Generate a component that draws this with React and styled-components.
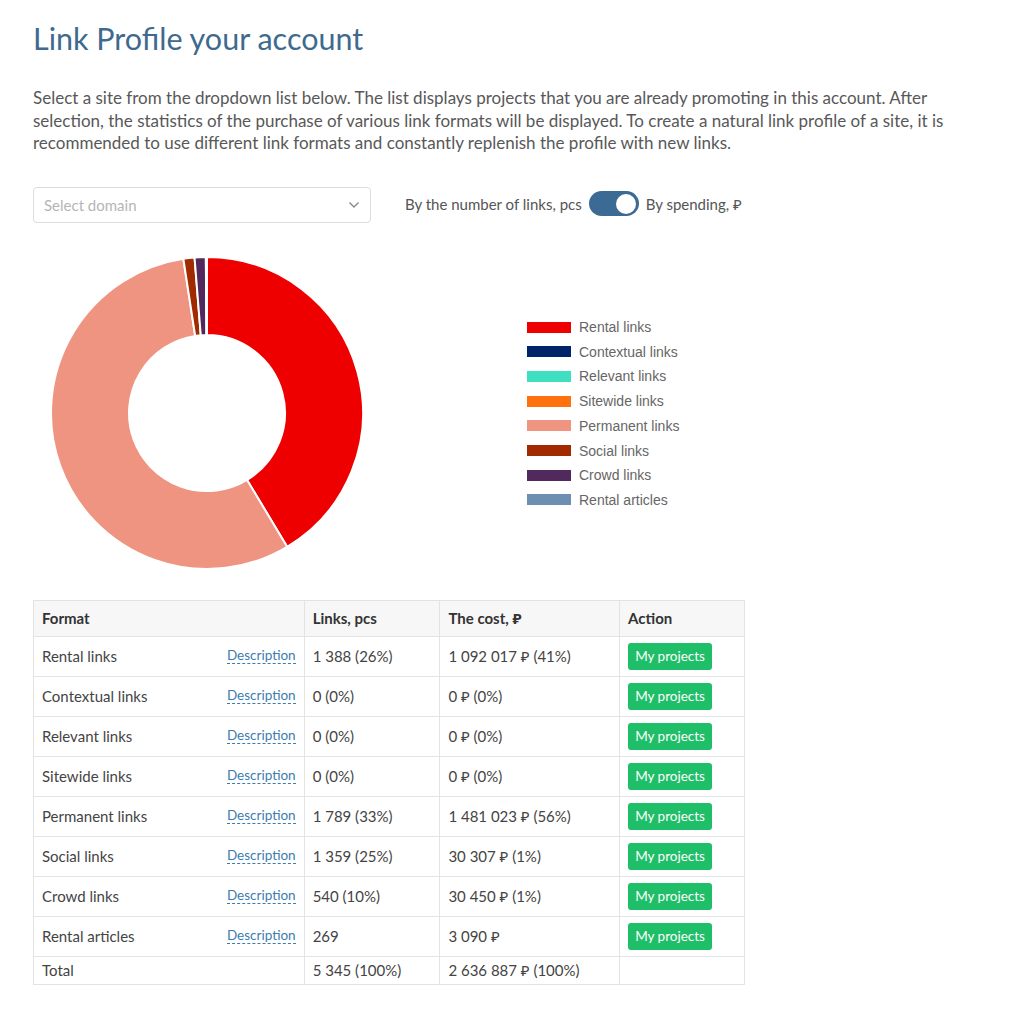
import React from "react";
import styled, { createGlobalStyle } from "styled-components";

const GlobalStyle = createGlobalStyle`
  html, body { margin: 0; padding: 0; background: #fff; }
  body { font-family: Lato, "Noto Sans", sans-serif; color: #555; }
  * { box-sizing: border-box; }
`;

const Page = styled.div`
  padding: 18px 30px 30px 33px;
  width: 1036px;
`;

const Title = styled.h1`
  margin: 0;
  font-size: 30.5px;
  font-weight: 400;
  color: #3e6a8e;
  line-height: 40px;
`;

const Intro = styled.p`
  margin: 29px 0 0;
  font-size: 17px;
  line-height: 22.5px;
  color: #585858;
  max-width: 955px;
`;

const Controls = styled.div`
  display: flex;
  align-items: center;
  margin-top: 32px;
  gap: 34px;
`;

const Select = styled.div`
  width: 338px;
  height: 36px;
  border: 1px solid #dcdcdc;
  border-radius: 4px;
  display: flex;
  align-items: center;
  justify-content: space-between;
  padding: 0 10px 0 10px;
  font-size: 15px;
  color: #b5b5b5;
`;

const SwitchRow = styled.div`
  display: flex;
  align-items: center;
  gap: 7px;
  font-size: 15px;
  color: #555;
  margin-top: -2px;
`;

const Track = styled.div`
  width: 50px;
  height: 25px;
  border-radius: 13px;
  background: #3b6b95;
  display: flex;
  align-items: center;
  justify-content: ${(p) => (p.on ? "flex-end" : "flex-start")};
  padding: 0 3px;
`;

const Knob = styled.div`
  width: 20px;
  height: 20px;
  border-radius: 50%;
  background: #fff;
`;

const ChartRow = styled.div`
  display: flex;
  align-items: center;
  margin-top: 33px;
`;

const ChartBox = styled.div`
  width: 494px;
  height: 314px;
  display: flex;
  align-items: center;
  padding-left: 17px;
`;

const Legend = styled.ul`
  list-style: none;
  margin: 2px 0 0;
  padding: 0;
  font-family: "Liberation Sans", Arial, sans-serif;
  font-size: 14px;
  color: #666;
  display: flex;
  flex-direction: column;
  gap: 8.7px;
`;

const LegendItem = styled.li`
  display: flex;
  align-items: center;
  gap: 8px;
  height: 16px;
`;

const Swatch = styled.span`
  width: 44px;
  height: 11px;
  background: ${(p) => p.color};
  display: inline-block;
`;

const Table = styled.table`
  margin-top: 30px;
  border-collapse: collapse;
  width: 712px;
  font-size: 15px;
  color: #444;
`;

const Th = styled.th`
  text-align: left;
  font-weight: 700;
  color: #333;
  background: #f7f7f7;
  border: 1px solid #e3e3e3;
  height: 36px;
  padding: 0 8px;
  width: ${(p) => p.w}px;
`;

const Td = styled.td`
  border: 1px solid #e3e3e3;
  height: ${(p) => (p.short ? 28 : 40)}px;
  padding: 0 8px;
  vertical-align: middle;
`;

const FormatCell = styled.div`
  display: flex;
  justify-content: space-between;
  align-items: center;
`;

const DescLink = styled.a`
  color: #3c7cb0;
  font-size: 13.5px;
  text-decoration: none;
  border-bottom: 1px dashed #3c7cb0;
  line-height: 16px;
  margin-top: -2px;
  cursor: pointer;
`;

const Button = styled.button`
  background: #1fbe69;
  color: #fff;
  border: none;
  border-radius: 3px;
  font-family: Lato, "Noto Sans", sans-serif;
  font-size: 13.5px;
  height: 27px;
  width: 84px;
  padding: 0;
  cursor: pointer;
  display: block;
`;

const COLORS = {
  rental: "#ee0000",
  contextual: "#00246a",
  relevant: "#40dfc2",
  sitewide: "#ff7010",
  permanent: "#f09482",
  social: "#a12a00",
  crowd: "#52295c",
  articles: "#6d8fb1",
};

const legend = [
  ["Rental links", COLORS.rental],
  ["Contextual links", COLORS.contextual],
  ["Relevant links", COLORS.relevant],
  ["Sitewide links", COLORS.sitewide],
  ["Permanent links", COLORS.permanent],
  ["Social links", COLORS.social],
  ["Crowd links", COLORS.crowd],
  ["Rental articles", COLORS.articles],
];

const segments = [
  [1092017, COLORS.rental],
  [0, COLORS.contextual],
  [0, COLORS.relevant],
  [0, COLORS.sitewide],
  [1481023, COLORS.permanent],
  [30307, COLORS.social],
  [30450, COLORS.crowd],
  [3090, COLORS.articles],
];

const rows = [
  ["Rental links", "1 388 (26%)", "1 092 017 ₽ (41%)"],
  ["Contextual links", "0 (0%)", "0 ₽ (0%)"],
  ["Relevant links", "0 (0%)", "0 ₽ (0%)"],
  ["Sitewide links", "0 (0%)", "0 ₽ (0%)"],
  ["Permanent links", "1 789 (33%)", "1 481 023 ₽ (56%)"],
  ["Social links", "1 359 (25%)", "30 307 ₽ (1%)"],
  ["Crowd links", "540 (10%)", "30 450 ₽ (1%)"],
  ["Rental articles", "269", "3 090 ₽"],
];

function Donut() {
  const total = segments.reduce((s, [v]) => s + v, 0);
  const cx = 157, cy = 157, R = 156, r = 78;
  let acc = 0;
  const pt = (a, rad) => [cx + rad * Math.sin(a), cy - rad * Math.cos(a)];
  const paths = [];
  segments.forEach(([v, c], i) => {
    if (!v) return;
    const a0 = (acc / total) * Math.PI * 2;
    acc += v;
    const a1 = (acc / total) * Math.PI * 2;
    const large = a1 - a0 > Math.PI ? 1 : 0;
    const [x0, y0] = pt(a0, R);
    const [x1, y1] = pt(a1, R);
    const [x2, y2] = pt(a1, r);
    const [x3, y3] = pt(a0, r);
    const d = `M${x0} ${y0} A${R} ${R} 0 ${large} 1 ${x1} ${y1} L${x2} ${y2} A${r} ${r} 0 ${large} 0 ${x3} ${y3} Z`;
    paths.push(<path key={i} d={d} fill={c} stroke="#fff" strokeWidth="2" strokeLinejoin="round" />);
  });
  return (
    <svg width="314" height="314" viewBox="0 0 314 314">
      {paths}
    </svg>
  );
}

export default function App() {
  return (
    <Page>
      <GlobalStyle />
      <Title>Link Profile your account</Title>
      <Intro>
        Select a site from the dropdown list below. The list displays projects that you are already promoting in this
        account. After selection, the statistics of the purchase of various link formats will be displayed. To create a
        natural link profile of a site, it is recommended to use different link formats and constantly replenish the
        profile with new links.
      </Intro>
      <Controls>
        <Select>
          <span>Select domain</span>
          <svg width="12" height="8" viewBox="0 0 12 8">
            <path d="M1.5 1.5 L6 6 L10.5 1.5" fill="none" stroke="#888" strokeWidth="1.4" />
          </svg>
        </Select>
        <SwitchRow>
          <span>By the number of links, pcs</span>
          <Track on>
            <Knob />
          </Track>
          <span>By spending, ₽</span>
        </SwitchRow>
      </Controls>
      <ChartRow>
        <ChartBox>
          <Donut />
        </ChartBox>
        <Legend>
          {legend.map(([label, c]) => (
            <LegendItem key={label}>
              <Swatch color={c} />
              {label}
            </LegendItem>
          ))}
        </Legend>
      </ChartRow>
      <Table>
        <thead>
          <tr>
            <Th w={271}>Format</Th>
            <Th w={136}>Links, pcs</Th>
            <Th w={180}>The cost, ₽</Th>
            <Th w={125}>Action</Th>
          </tr>
        </thead>
        <tbody>
          {rows.map(([name, links, cost]) => (
            <tr key={name}>
              <Td>
                <FormatCell>
                  <span>{name}</span>
                  <DescLink>Description</DescLink>
                </FormatCell>
              </Td>
              <Td>{links}</Td>
              <Td>{cost}</Td>
              <Td>
                <Button>My projects</Button>
              </Td>
            </tr>
          ))}
          <tr>
            <Td short>Total</Td>
            <Td short>5 345 (100%)</Td>
            <Td short>2 636 887 ₽ (100%)</Td>
            <Td short />
          </tr>
        </tbody>
      </Table>
    </Page>
  );
}
